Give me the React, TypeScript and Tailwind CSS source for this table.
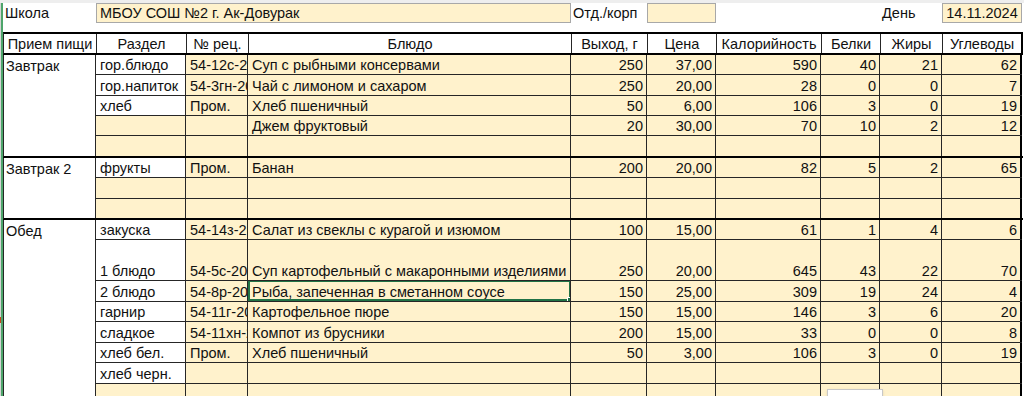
import React from "react";

type Row = {
  razdel: string;
  rec: string;
  dish: string;
  nums: string[];
  h: string;
  selected?: boolean;
};

const grid9 = "grid grid-cols-[90px_62px_323px_76px_69px_105px_59px_62px_80px]";
const grid10 = "grid grid-cols-[93px_90px_62px_323px_76px_69px_105px_59px_62px_80px]";

const empty = ["", "", "", "", "", ""];

const groups: { meal: string; rows: Row[] }[] = [
  {
    meal: "Завтрак",
    rows: [
      { razdel: "гор.блюдо", rec: "54-12с-2020", dish: "Суп с рыбными консервами", nums: ["250", "37,00", "590", "40", "21", "62"], h: "h-[20px]" },
      { razdel: "гор.напиток", rec: "54-3гн-2020", dish: "Чай с лимоном и сахаром", nums: ["250", "20,00", "28", "0", "0", "7"], h: "h-[21px]" },
      { razdel: "хлеб", rec: "Пром.", dish: "Хлеб пшеничный", nums: ["50", "6,00", "106", "3", "0", "19"], h: "h-[20px]" },
      { razdel: "", rec: "", dish: "Джем фруктовый", nums: ["20", "30,00", "70", "10", "2", "12"], h: "h-[20px]" },
      { razdel: "", rec: "", dish: "", nums: empty, h: "h-[20px]" },
    ],
  },
  {
    meal: "Завтрак 2",
    rows: [
      { razdel: "фрукты", rec: "Пром.", dish: "Банан", nums: ["200", "20,00", "82", "5", "2", "65"], h: "h-[20px]" },
      { razdel: "", rec: "", dish: "", nums: empty, h: "h-[21px]" },
      { razdel: "", rec: "", dish: "", nums: empty, h: "h-[19px]" },
    ],
  },
  {
    meal: "Обед",
    rows: [
      { razdel: "закуска", rec: "54-14з-2020", dish: "Салат из свеклы с курагой и изюмом", nums: ["100", "15,00", "61", "1", "4", "6"], h: "h-[20px]" },
      { razdel: "1 блюдо", rec: "54-5с-2020", dish: "Суп картофельный с макаронными изделиями", nums: ["250", "20,00", "645", "43", "22", "70"], h: "h-[41px]" },
      { razdel: "2 блюдо", rec: "54-8р-2020", dish: "Рыба, запеченная в сметанном соусе", nums: ["150", "25,00", "309", "19", "24", "4"], h: "h-[21px]", selected: true },
      { razdel: "гарнир", rec: "54-11г-2020", dish: "Картофельное пюре", nums: ["150", "15,00", "146", "3", "6", "20"], h: "h-[20px]" },
      { razdel: "сладкое", rec: "54-11хн-2020", dish: "Компот из брусники", nums: ["200", "15,00", "33", "0", "0", "8"], h: "h-[21px]" },
      { razdel: "хлеб бел.", rec: "Пром.", dish: "Хлеб пшеничный", nums: ["50", "3,00", "106", "3", "0", "19"], h: "h-[20px]" },
      { razdel: "хлеб черн.", rec: "", dish: "", nums: empty, h: "h-[21px]" },
      { razdel: "", rec: "", dish: "", nums: empty, h: "h-[21px]" },
    ],
  },
];

const headers = ["Прием пищи", "Раздел", "№ рец.", "Блюдо", "Выход, г", "Цена", "Калорийность", "Белки", "Жиры", "Углеводы"];

const DataRow = ({ row, last }: { row: Row; last: boolean }) => {
  const base = "flex items-end overflow-hidden whitespace-nowrap border-r border-[#262626]";
  return (
    <div className={`${grid9} ${row.h} ${last ? "" : "border-b border-[#262626]"}`}>
      <div className={`${base} pl-1 ${row.razdel ? "bg-white" : "bg-[#fff2cc]"}`}>{row.razdel}</div>
      <div className={`${base} pl-1 bg-[#fff2cc]`}>
        <span className="block overflow-hidden">{row.rec}</span>
      </div>
      <div className={`${base} pl-1 bg-[#fff2cc] relative`}>
        {row.dish}
        {row.selected && (
          <div className="absolute -top-[1px] left-0 right-[-1px] bottom-0 border-2 border-[#217346]">
            <div className="absolute -bottom-[4px] -right-[4px] w-[6px] h-[6px] bg-[#217346] border border-white" />
          </div>
        )}
      </div>
      {row.nums.map((n, i) => (
        <div
          key={i}
          className={`${base} justify-end pr-[3px] bg-[#fff2cc] ${i === 5 ? "border-r-2 border-r-black" : ""}`}
        >
          {n}
        </div>
      ))}
    </div>
  );
};

export default function App() {
  return (
    <div
      className="relative w-[1024px] h-[396px] overflow-hidden bg-white text-[#111] text-[14.5px] leading-[18px]"
      style={{ fontFamily: '"Liberation Sans", Arial, sans-serif' }}
    >
      <div className="h-[3px] bg-[#eeeeee]" />
      <div className="flex">
        <div className="flex shrink-0">
          <div className="w-[1px] bg-[#d4d4d4] flex flex-col">
            <div className="h-[314px]" />
            <div className="h-[6px] bg-[#c9431a]" />
          </div>
          <div className="w-[2px] bg-[#4ea56b]" />
        </div>

        <div className="flex flex-col">
          {/* шапка */}
          <div className={`${grid10} h-[20px]`}>
            <div className="flex items-center pl-[2px]">Школа</div>
            <div className="col-span-3 flex items-center pl-[3px] bg-[#fff2cc] border border-[#a8a8a8]">
              МБОУ СОШ №2 г. Ак-Довурак
            </div>
            <div className="flex items-center pl-[2px] whitespace-nowrap">Отд./корп</div>
            <div className="bg-[#fff2cc] border border-[#a8a8a8]" />
            <div />
            <div />
            <div className="flex items-center pl-[2px]">День</div>
            <div className="flex items-center justify-center bg-[#fff2cc] border border-[#a8a8a8]">14.11.2024</div>
          </div>
          <div className="h-[9px]" />

          <div className={`${grid10} h-[23px] border-y-2 border-black border-l border-l-[#262626]`}>
            {headers.map((h, i) => (
              <div
                key={h}
                className={`flex items-center justify-center pt-[1px] whitespace-nowrap border-r ${i === 9 ? "border-r-2 border-r-black" : "border-[#262626]"}`}
              >
                {h}
              </div>
            ))}
          </div>

          {groups.map((g) => (
            <div key={g.meal} className="flex border-b-2 border-black border-l border-l-[#262626]">
              <div className="w-[92px] shrink-0 border-r border-[#262626] pl-[2px] pt-[2px] bg-white">
                {g.meal}
              </div>
              <div className="flex flex-col">
                {g.rows.map((r, i) => (
                  <DataRow key={i} row={r} last={i === g.rows.length - 1} />
                ))}
              </div>
            </div>
          ))}
        </div>
      </div>

      <div className="absolute left-[827px] top-[389px] w-[56px] h-[20px] bg-white border border-[#c8c8c8] shadow-sm" />
    </div>
  );
}
